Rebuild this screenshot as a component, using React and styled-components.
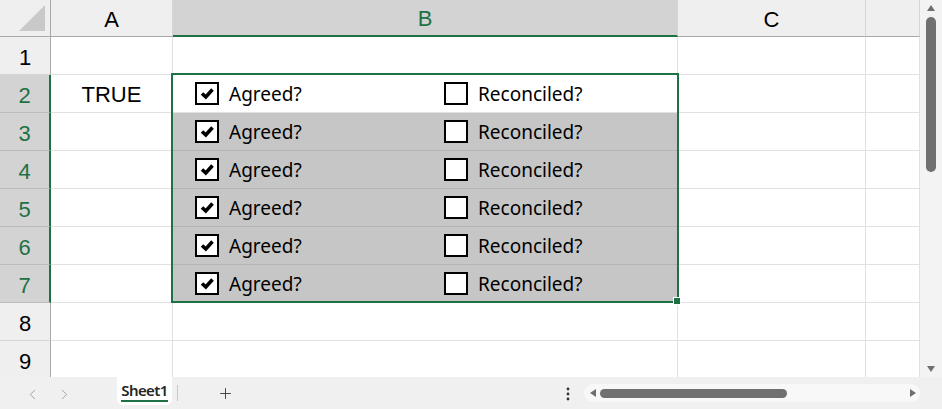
import React from "react";
import styled, { createGlobalStyle } from "styled-components";
import { ChevronLeft, ChevronRight, Plus } from "lucide-react";

const GREEN = "#1e7145";

const columns = ["A", "B", "C", ""];
const rows = [1, 2, 3, 4, 5, 6, 7, 8, 9];
const selectedRows = [2, 3, 4, 5, 6, 7];

const GlobalStyle = createGlobalStyle`
	html, body {
		margin: 0;
		padding: 0;
		background: #fff;
		overflow: hidden;
	}
	body {
		font-family: "Liberation Sans", Arial, sans-serif;
	}
`;

const App = () => {
	return (
		<Window>
			<GlobalStyle />
			<Main>
				<SheetArea>
					<Grid>
						<Corner>
							<svg width='30' height='30' viewBox='0 0 30 30'>
								<polygon points='2,28 28,2 28,28' fill='#c9c9c9' />
							</svg>
						</Corner>
						{columns.map((col, idx) => (
							<ColHead key={idx} $active={col === "B"}>
								{col}
							</ColHead>
						))}
						{rows.map((row) => {
							const inSel = selectedRows.includes(row);
							return (
								<React.Fragment key={row}>
									<RowHead $active={inSel}>{row}</RowHead>
									<Cell $align='center'>
										{row === 2 && <BoolText>TRUE</BoolText>}
									</Cell>
									<Cell $fill={inSel && row !== 2}>
										{inSel && (
											<CheckRow>
												<Option>
													<Box>
														<svg width='19' height='19' viewBox='0 0 19 19'>
															<path
																d='M4 9.5 L7.8 13 L14.5 5.5'
																fill='none'
																stroke='#000'
																strokeWidth='3.6'
																strokeLinejoin='miter'
															/>
														</svg>
													</Box>
													<Label>Agreed?</Label>
												</Option>
												<Option>
													<Box />
													<Label>Reconciled?</Label>
												</Option>
											</CheckRow>
										)}
									</Cell>
									<Cell />
									<Cell />
								</React.Fragment>
							);
						})}
					</Grid>
					<Selection>
						<FillHandle />
					</Selection>
				</SheetArea>
				<VScroll>
					<ArrowUp />
					<VThumb />
					<ArrowDown />
				</VScroll>
			</Main>
			<BottomBar>
				<NavButton>
					<ChevronLeft size={17} strokeWidth={1.4} />
				</NavButton>
				<NavButton>
					<ChevronRight size={17} strokeWidth={1.4} />
				</NavButton>
				<Tab>
					<TabText>Sheet1</TabText>
				</Tab>
				<Divider />
				<AddButton>
					<Plus size={17} strokeWidth={1.3} />
				</AddButton>
				<Spacer />
				<Dots>
					<svg width='4' height='14' viewBox='0 0 4 14'>
						<circle cx='2' cy='2' r='1.4' fill='#333' />
						<circle cx='2' cy='7' r='1.4' fill='#333' />
						<circle cx='2' cy='12' r='1.4' fill='#333' />
					</svg>
				</Dots>
				<HScroll>
					<ArrowLeft />
					<HThumb />
					<Spacer />
					<ArrowRight />
				</HScroll>
			</BottomBar>
		</Window>
	);
};

export default App;

const Window = styled.div`
	width: 942px;
	height: 409px;
	display: flex;
	flex-direction: column;
	overflow: hidden;
	background: #fff;
`;

const Main = styled.div`
	display: flex;
	height: 377px;
`;

const SheetArea = styled.div`
	position: relative;
	flex: 1;
	overflow: hidden;
`;

const Grid = styled.div`
	display: grid;
	grid-template-columns: 51px 122px 505px 188px 54px;
	grid-template-rows: 37px;
	grid-auto-rows: 38px;
	& > * {
		box-sizing: border-box;
	}
`;

const Corner = styled.div`
	background: #efefef;
	border-right: 1px solid #a8a8a8;
	border-bottom: 1px solid #a8a8a8;
	display: flex;
	align-items: flex-end;
	justify-content: flex-end;
	padding: 0 3px 3px 0;
`;

const ColHead = styled.div`
	background: ${(p) => (p.$active ? "#d3d3d3" : "#efefef")};
	color: ${(p) => (p.$active ? GREEN : "#000")};
	border-right: 1px solid #d6d6d6;
	border-bottom: ${(p) => (p.$active ? `2px solid ${GREEN}` : "1px solid #a8a8a8")};
	display: flex;
	align-items: center;
	justify-content: center;
	padding-top: 3px;
	font-size: 22px;
`;

const RowHead = styled.div`
	background: ${(p) => (p.$active ? "#d3d3d3" : "#efefef")};
	color: ${(p) => (p.$active ? GREEN : "#000")};
	border-right: ${(p) => (p.$active ? `2px solid ${GREEN}` : "1px solid #a8a8a8")};
	border-bottom: 1px solid ${(p) => (p.$active ? "#bcbcbc" : "#d6d6d6")};
	display: flex;
	align-items: center;
	justify-content: center;
	padding-top: 4px;
	font-size: 22px;
`;

const Cell = styled.div`
	background: ${(p) => (p.$fill ? "#c6c6c6" : "#fff")};
	border-right: 1px solid #e1e1e1;
	border-bottom: 1px solid ${(p) => (p.$fill ? "#b4b4b4" : "#e1e1e1")};
	display: flex;
	align-items: center;
	justify-content: ${(p) => p.$align || "flex-start"};
	min-width: 0;
`;

const BoolText = styled.span`
	font-size: 22px;
	color: #000;
	padding-top: 2px;
`;

const CheckRow = styled.div`
	display: grid;
	grid-template-columns: 249px auto;
	align-items: center;
	padding-left: 22px;
`;

const Option = styled.div`
	display: flex;
	align-items: center;
	gap: 10px;
`;

const Box = styled.div`
	box-sizing: border-box;
	width: 24px;
	height: 23px;
	border: 2px solid #000;
	background: #fff;
	display: flex;
	align-items: center;
	justify-content: center;
`;

const Label = styled.span`
	font-family: "Noto Sans", "Open Sans", sans-serif;
	font-size: 19px;
	color: #000;
	white-space: nowrap;
`;

const Selection = styled.div`
	position: absolute;
	left: 171px;
	top: 73px;
	width: 508px;
	height: 230px;
	box-sizing: border-box;
	border: 2px solid ${GREEN};
	pointer-events: none;
`;

const FillHandle = styled.div`
	position: absolute;
	right: -4px;
	bottom: -4px;
	width: 6px;
	height: 6px;
	background: ${GREEN};
	border: 1px solid #fff;
`;

const VScroll = styled.div`
	width: 22px;
	background: #f3f3f3;
	display: flex;
	flex-direction: column;
	align-items: center;
	padding: 5px 0 5px;
	box-sizing: border-box;
`;

const ArrowUp = styled.div`
	width: 0;
	height: 0;
	border-left: 4px solid transparent;
	border-right: 4px solid transparent;
	border-bottom: 6px solid #6f6f6f;
`;

const ArrowDown = styled.div`
	margin-top: auto;
	width: 0;
	height: 0;
	border-left: 4px solid transparent;
	border-right: 4px solid transparent;
	border-top: 6px solid #6f6f6f;
`;

const VThumb = styled.div`
	margin-top: 6px;
	width: 10px;
	height: 155px;
	border-radius: 5px;
	background: #707070;
`;

const BottomBar = styled.div`
	height: 32px;
	background: #f0f0f0;
	display: flex;
	align-items: center;
	padding-left: 16px;
	box-sizing: border-box;
`;

const NavButton = styled.div`
	width: 32px;
	display: flex;
	justify-content: center;
	color: #a3a3a3;
	padding-top: 2px;
`;

const Tab = styled.div`
	align-self: flex-start;
	margin-left: 37px;
	width: 55px;
	height: 28px;
	background: #fff;
	border-radius: 0 0 6px 6px;
	display: flex;
	justify-content: center;
	align-items: flex-end;
	box-sizing: border-box;
	padding-bottom: 3px;
`;

const TabText = styled.span`
	font-family: "Noto Sans", "Open Sans", sans-serif;
	font-size: 15px;
	font-weight: 600;
	letter-spacing: -0.6px;
	color: #262626;
	line-height: 18px;
	border-bottom: 2px solid ${GREEN};
	padding-bottom: 1px;
`;

const Divider = styled.div`
	margin-left: 5px;
	width: 1px;
	height: 16px;
	background: #c8c8c8;
`;

const AddButton = styled.div`
	margin-left: 31px;
	width: 32px;
	display: flex;
	justify-content: center;
	color: #3a3a3a;
	padding-top: 1px;
`;

const Spacer = styled.div`
	flex: 1;
`;

const Dots = styled.div`
	width: 16px;
	display: flex;
	justify-content: center;
	padding-top: 1px;
`;

const HScroll = styled.div`
	margin-left: 8px;
	margin-right: 22px;
	width: 336px;
	height: 18px;
	border-radius: 9px;
	background: #f8f8f8;
	display: flex;
	align-items: center;
	padding: 0 4px 0 6px;
	box-sizing: border-box;
`;

const ArrowLeft = styled.div`
	width: 0;
	height: 0;
	border-top: 4px solid transparent;
	border-bottom: 4px solid transparent;
	border-right: 6px solid #6f6f6f;
`;

const ArrowRight = styled.div`
	width: 0;
	height: 0;
	border-top: 4px solid transparent;
	border-bottom: 4px solid transparent;
	border-left: 6px solid #6f6f6f;
`;

const HThumb = styled.div`
	margin-left: 4px;
	width: 187px;
	height: 9px;
	border-radius: 5px;
	background: #707070;
`;
